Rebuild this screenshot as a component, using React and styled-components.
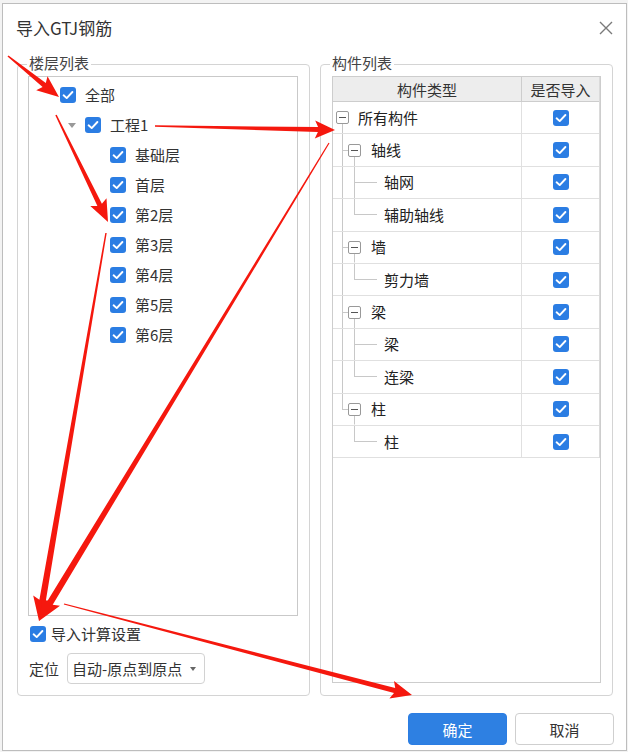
import React from "react";
import styled, { createGlobalStyle } from "styled-components";

const GlobalStyle = createGlobalStyle`
  html, body {
    margin: 0;
    padding: 0;
    background: #f3f3f3;
  }
  body {
    font-family: "Noto Sans CJK SC", "Noto Sans", "Liberation Sans", sans-serif;
    color: #333;
  }
`;

const BLUE = "#2b7de3";
const LINE = "#c8c8c8";

const Page = styled.div`
  position: relative;
  width: 628px;
  height: 752px;
  box-sizing: border-box;
  padding: 3px 1px 1px 2px;
`;

const Dialog = styled.div`
  width: 625px;
  height: 748px;
  box-sizing: border-box;
  border: 1px solid #bdbdbd;
  background: #fff;
  display: flex;
  flex-direction: column;
`;

const TitleBar = styled.div`
  height: 47px;
  flex: none;
  display: flex;
  align-items: center;
  justify-content: space-between;
  padding: 0 13px;
`;

const Title = styled.div`
  font-size: 17px;
  color: #333;
`;

const CloseButton = styled.span`
  display: flex;
  width: 14px;
  height: 14px;
`;

const Body = styled.div`
  flex: 1;
  display: flex;
  gap: 10px;
  padding: 13px 12px 0 14px;
  min-height: 0;
`;

const GroupBox = styled.div`
  position: relative;
  width: 293px;
  height: 632px;
  box-sizing: border-box;
  border: 1px solid #d4d4d4;
  border-radius: 4px;
  display: flex;
  flex-direction: column;
  padding: ${({ $pad }) => $pad};
`;

const Legend = styled.span`
  position: absolute;
  top: -12px;
  left: 9px;
  padding: 0 2px;
  background: #fff;
  font-size: 15px;
  line-height: 20px;
  color: #444;
`;

const ListBox = styled.div`
  flex: 1;
  border: 1px solid #c9c9c9;
  padding-top: 3px;
`;

const FloorRow = styled.div`
  height: 30px;
  display: flex;
  align-items: center;
  padding-left: ${({ $level }) => [31, 39, 81][$level]}px;
`;

const Caret = styled.span`
  width: 0;
  height: 0;
  border-left: 4px solid transparent;
  border-right: 4px solid transparent;
  border-top: 5px solid #999;
  margin-right: 9px;
`;

const Label = styled.span`
  font-size: 15px;
  line-height: 20px;
  color: #333;
  margin-left: ${({ $gap }) => $gap ?? 9}px;
  white-space: nowrap;
`;

const Box = styled.span`
  flex: none;
  width: 16px;
  height: 16px;
  border-radius: 3px;
  background: ${BLUE};
  display: flex;
  align-items: center;
  justify-content: center;
`;

const OptionRow = styled.div`
  display: flex;
  align-items: center;
  height: 17px;
  margin: 9px 0 0 2px;
`;

const PositionRow = styled.div`
  display: flex;
  align-items: center;
  gap: 8px;
  margin: 11px 0 0 1px;
  font-size: 15px;
`;

const Select = styled.div`
  width: 138px;
  height: 31px;
  box-sizing: border-box;
  border: 1px solid #d2d2d2;
  border-radius: 4px;
  display: flex;
  align-items: center;
  justify-content: space-between;
  padding: 0 8px 0 4px;
  font-size: 15px;
  color: #333;
`;

const SelectArrow = styled.span`
  width: 0;
  height: 0;
  border-left: 3px solid transparent;
  border-right: 3px solid transparent;
  border-top: 4px solid #666;
`;

const TableBox = styled.div`
  flex: 1;
  border: 1px solid #cdcdcd;
  display: flex;
  flex-direction: column;
`;

const Table = styled.div`
  width: 267px;
  box-sizing: border-box;
  border-right: 1px solid #dadada;
  display: grid;
  grid-template-columns: 189px 77px;
`;

const HeadCell = styled.div`
  height: 25px;
  box-sizing: border-box;
  background: #ededed;
  border-bottom: 1px solid #cdcdcd;
  border-right: ${({ $divider }) => ($divider ? "1px solid #cdcdcd" : "none")};
  display: flex;
  align-items: center;
  justify-content: center;
  font-size: 15px;
  color: #333;
`;

const Cell = styled.div`
  height: 32.4px;
  box-sizing: border-box;
  border-bottom: 1px solid #e0e0e0;
  border-right: ${({ $divider }) => ($divider ? "1px solid #e0e0e0" : "none")};
  display: flex;
  align-items: stretch;
  justify-content: ${({ $center }) => ($center ? "center" : "flex-start")};
  padding-left: ${({ $center }) => ($center ? 0 : 3)}px;
`;

const CheckCell = styled.span`
  display: flex;
  align-items: center;
`;

const grad = `linear-gradient(${LINE}, ${LINE})`;

const guideBackground = ({ $v, $h }) => {
  const layers = [];
  if ($v === "full") layers.push(`${grad} 6px 0 / 1px 100% no-repeat`);
  if ($v === "top") layers.push(`${grad} 6px 0 / 1px 50% no-repeat`);
  if ($v === "bottom") layers.push(`${grad} 6px 100% / 1px 50% no-repeat`);
  if ($h) layers.push(`${grad} 6px 50% / ${$h}px 1px no-repeat`);
  return layers.length ? layers.join(", ") : "none";
};

const Guide = styled.span`
  flex: none;
  width: ${({ $w }) => $w}px;
  background: ${guideBackground};
  display: flex;
  align-items: center;
`;

const TreeText = styled.span`
  align-self: center;
  font-size: 15px;
  line-height: 20px;
  color: #222;
  margin-left: ${({ $gap }) => $gap}px;
  white-space: nowrap;
`;

const Minus = styled.span`
  width: 13px;
  height: 13px;
  box-sizing: border-box;
  border: 1px solid #999;
  border-radius: 2px;
  background: #fff;
  display: flex;
  align-items: center;
  justify-content: center;
  &::after {
    content: "";
    width: 7px;
    height: 1px;
    background: #555;
  }
`;

const Footer = styled.div`
  flex: none;
  height: 46px;
  display: flex;
  justify-content: flex-end;
  align-items: flex-start;
  gap: 8px;
  padding: 9px 12px 0 0;
  box-sizing: border-box;
`;

const Button = styled.button`
  width: 99px;
  height: 32px;
  border-radius: 4px;
  font-family: inherit;
  font-size: 15px;
  border: 1px solid ${({ $primary }) => ($primary ? BLUE : "#cfcfcf")};
  background: ${({ $primary }) => ($primary ? "#2e80e2" : "#fff")};
  color: ${({ $primary }) => ($primary ? "#fff" : "#333")};
`;

const Overlay = styled.svg`
  position: absolute;
  top: 0;
  left: 0;
  pointer-events: none;
`;

const floors = [
  { label: "全部", level: 0 },
  { label: "工程1", level: 1, caret: true },
  { label: "基础层", level: 2 },
  { label: "首层", level: 2 },
  { label: "第2层", level: 2 },
  { label: "第3层", level: 2 },
  { label: "第4层", level: 2 },
  { label: "第5层", level: 2 },
  { label: "第6层", level: 2 },
];

const parts = [
  { label: "所有构件", level: 0 },
  { label: "轴线", level: 1 },
  { label: "轴网", level: 2 },
  { label: "辅助轴线", level: 2, last: true },
  { label: "墙", level: 1 },
  { label: "剪力墙", level: 2, last: true },
  { label: "梁", level: 1 },
  { label: "梁", level: 2 },
  { label: "连梁", level: 2, last: true },
  { label: "柱", level: 1, last: true },
  { label: "柱", level: 2, last: true, parentLast: true },
];

// red annotation arrows: tail, tip, tail width, shaft width, head length, head half width
const arrows = [
  [8, 56, 59, 97, 1.5, 5, 19, 9],
  [56, 115, 108, 222, 1.5, 5, 19, 9],
  [155, 126, 335, 130, 1.5, 5, 17, 9],
  [106, 233, 39, 621, 1.5, 6.5, 21, 10],
  [329, 143, 39, 621, 1.2, 6.5, 21, 10],
  [64, 604, 412, 695, 1.2, 5, 18, 9],
];

const arrowPoints = ([x1, y1, x2, y2, w0, w1, hl, hw]) => {
  const dx = x2 - x1;
  const dy = y2 - y1;
  const len = Math.hypot(dx, dy);
  const ux = dx / len;
  const uy = dy / len;
  const nx = -uy;
  const ny = ux;
  const bx = x2 - ux * hl;
  const by = y2 - uy * hl;
  const wx = bx - ux * 3;
  const wy = by - uy * 3;
  const pts = [
    [x1 + (nx * w0) / 2, y1 + (ny * w0) / 2],
    [bx + (nx * w1) / 2, by + (ny * w1) / 2],
    [wx + nx * hw, wy + ny * hw],
    [x2, y2],
    [wx - nx * hw, wy - ny * hw],
    [bx - (nx * w1) / 2, by - (ny * w1) / 2],
    [x1 - (nx * w0) / 2, y1 - (ny * w0) / 2],
  ];
  return pts.map((p) => p.map((v) => v.toFixed(1)).join(",")).join(" ");
};

const Check = () => (
  <Box>
    <svg width="16" height="16" viewBox="0 0 16 16">
      <path
        d="M3.6 8.3 L6.7 11.1 L12.4 5"
        fill="none"
        stroke="#fff"
        strokeWidth="1.9"
        strokeLinecap="round"
        strokeLinejoin="round"
      />
    </svg>
  </Box>
);

const TreeCell = ({ item }) => {
  if (item.level === 0) {
    return (
      <>
        <Guide $w={13} $v="bottom">
          <Minus />
        </Guide>
        <TreeText $gap={9}>{item.label}</TreeText>
      </>
    );
  }
  if (item.level === 1) {
    return (
      <>
        <Guide $w={12} $v={item.last ? "top" : "full"} $h={6} />
        <Guide $w={13} $v="bottom">
          <Minus />
        </Guide>
        <TreeText $gap={10}>{item.label}</TreeText>
      </>
    );
  }
  return (
    <>
      <Guide $w={12} $v={item.parentLast ? "none" : "full"} />
      <Guide $w={36} $v={item.last ? "top" : "full"} $h={23} />
      <TreeText $gap={0}>{item.label}</TreeText>
    </>
  );
};

export default function App() {
  return (
    <Page>
      <GlobalStyle />
      <Dialog>
        <TitleBar>
          <Title>导入GTJ钢筋</Title>
          <CloseButton>
            <svg width="14" height="14" viewBox="0 0 14 14">
              <path d="M1 1 L13 13 M13 1 L1 13" stroke="#7a7a7a" strokeWidth="1.4" />
            </svg>
          </CloseButton>
        </TitleBar>

        <Body>
          <GroupBox $pad="11px 11px 11px 10px">
            <Legend>楼层列表</Legend>
            <ListBox>
              {floors.map((f) => (
                <FloorRow key={f.label} $level={f.level}>
                  {f.caret && <Caret />}
                  <Check />
                  <Label>{f.label}</Label>
                </FloorRow>
              ))}
            </ListBox>
            <OptionRow>
              <Check />
              <Label $gap={5}>导入计算设置</Label>
            </OptionRow>
            <PositionRow>
              <span>定位</span>
              <Select>
                <span>自动-原点到原点</span>
                <SelectArrow />
              </Select>
            </PositionRow>
          </GroupBox>

          <GroupBox $pad="11px 11px 12px 11px">
            <Legend>构件列表</Legend>
            <TableBox>
              <Table>
                <HeadCell $divider>构件类型</HeadCell>
                <HeadCell>是否导入</HeadCell>
                {parts.map((p, i) => (
                  <React.Fragment key={i}>
                    <Cell $divider>
                      <TreeCell item={p} />
                    </Cell>
                    <Cell $center>
                      <CheckCell>
                        <Check />
                      </CheckCell>
                    </Cell>
                  </React.Fragment>
                ))}
              </Table>
            </TableBox>
          </GroupBox>
        </Body>

        <Footer>
          <Button $primary>确定</Button>
          <Button>取消</Button>
        </Footer>
      </Dialog>

      <Overlay width="628" height="752" viewBox="0 0 628 752">
        {arrows.map((a, i) => (
          <polygon key={i} points={arrowPoints(a)} fill="#f5180e" />
        ))}
      </Overlay>
    </Page>
  );
}
